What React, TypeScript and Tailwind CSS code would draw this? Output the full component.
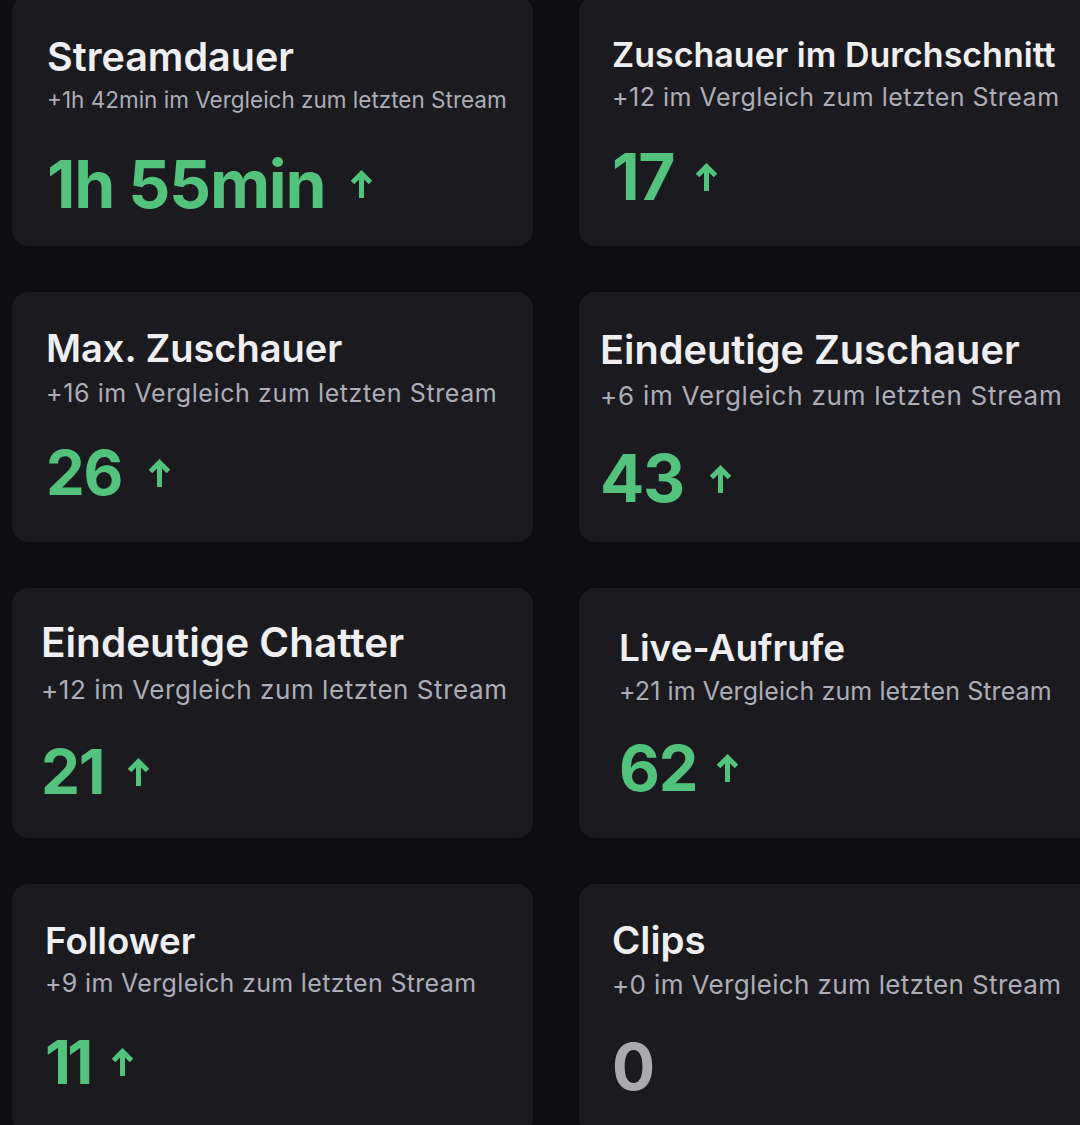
import React from "react";

type Stat = {
  title: string;
  sub: string;
  value: string;
  up: boolean;
  pad: string;
  titleCls: string;
  subCls: string;
  valueCls: string;
  arrowGap: string;
};

const stats: Stat[] = [
  { title: "Streamdauer", sub: "+1h 42min im Vergleich zum letzten Stream", value: "1h 55min", up: true, pad: "pl-[35px] pt-[39px]", titleCls: "text-[39.5px]", subCls: "text-[22.5px] mt-[6px]", valueCls: "text-[66px] mt-[33px]", arrowGap: "ml-[25px]" },
  { title: "Zuschauer im Durchschnitt", sub: "+12 im Vergleich zum letzten Stream", value: "17", up: true, pad: "pl-[33px] pt-[37px]", titleCls: "text-[34px]", subCls: "text-[25px] tracking-[0.5px] mt-[5px]", valueCls: "text-[64px] mt-[29px]", arrowGap: "ml-[21px]" },
  { title: "Max. Zuschauer", sub: "+16 im Vergleich zum letzten Stream", value: "26", up: true, pad: "pl-[34px] pt-[34px]", titleCls: "text-[38px]", subCls: "text-[25px] tracking-[0.6px] mt-[8px]", valueCls: "text-[61.5px] mt-[29px]", arrowGap: "ml-[26px]" },
  { title: "Eindeutige Zuschauer", sub: "+6 im Vergleich zum letzten Stream", value: "43", up: true, pad: "pl-[21px] pt-[36px]", titleCls: "text-[39.7px]", subCls: "text-[26px] tracking-[0.75px] mt-[9px]", valueCls: "text-[65.5px] mt-[32px]", arrowGap: "ml-[25px]" },
  { title: "Eindeutige Chatter", sub: "+12 im Vergleich zum letzten Stream", value: "21", up: true, pad: "pl-[29px] pt-[33px]", titleCls: "text-[40.5px]", subCls: "text-[26px] tracking-[0.55px] mt-[10px]", valueCls: "text-[62px] mt-[31px]", arrowGap: "ml-[23px]" },
  { title: "Live-Aufrufe", sub: "+21 im Vergleich zum letzten Stream", value: "62", up: true, pad: "pl-[40px] pt-[38px]", titleCls: "text-[37px]", subCls: "text-[25px] tracking-[0.1px] mt-[6px]", valueCls: "text-[63px] mt-[26px]", arrowGap: "ml-[19px]" },
  { title: "Follower", sub: "+9 im Vergleich zum letzten Stream", value: "11", up: true, pad: "pl-[33px] pt-[35px]", titleCls: "text-[36.7px]", subCls: "text-[25px] tracking-[0.33px] mt-[5px]", valueCls: "text-[60px] tracking-[-0.06em] mt-[28px]", arrowGap: "ml-[21px]" },
  { title: "Clips", sub: "+0 im Vergleich zum letzten Stream", value: "0", up: false, pad: "pl-[33px] pt-[34px]", titleCls: "text-[38.5px]", subCls: "text-[26px] tracking-[0.36px] mt-[8px]", valueCls: "text-[64px] mt-[31px]", arrowGap: "ml-[21px]" },
];

function ArrowUp() {
  return (
    <svg width="23" height="29" viewBox="0 0 23 29" fill="none" className="shrink-0">
      <path d="M11.5 28V4" stroke="#52c27c" strokeWidth="5" />
      <path d="M2.5 12.5L11.5 3.5L20.5 12.5" stroke="#52c27c" strokeWidth="5" strokeLinejoin="miter" />
    </svg>
  );
}

function StatCard({ s }: { s: Stat }) {
  return (
    <div className={`h-[250px] w-[521px] rounded-[16px] bg-[#1b1b1f] flex flex-col ${s.pad}`}>
      <div className={`leading-[44px] font-semibold text-[#efeff1] whitespace-nowrap ${s.titleCls}`}>{s.title}</div>
      <div className={`leading-[30px] text-[#adadb8] whitespace-nowrap ${s.subCls}`}>{s.sub}</div>
      <div className={`flex items-center leading-[72px] tracking-[-0.02em] ${s.valueCls}`}>
        <span className={`font-bold ${s.up ? "text-[#52c27c]" : "text-[#a9a9b0]"}`}>{s.value}</span>
        {s.up && <span className={s.arrowGap}><ArrowUp /></span>}
      </div>
    </div>
  );
}

export default function App() {
  return (
    <div className="w-[1080px] h-[1125px] overflow-hidden bg-[#0e0e10] font-['Inter',sans-serif]">
      <div className="grid grid-cols-[521px_521px] gap-x-[46px] gap-y-[46px] pl-[12px] mt-[-4px]">
        {stats.map((s) => (
          <StatCard key={s.title} s={s} />
        ))}
      </div>
    </div>
  );
}
